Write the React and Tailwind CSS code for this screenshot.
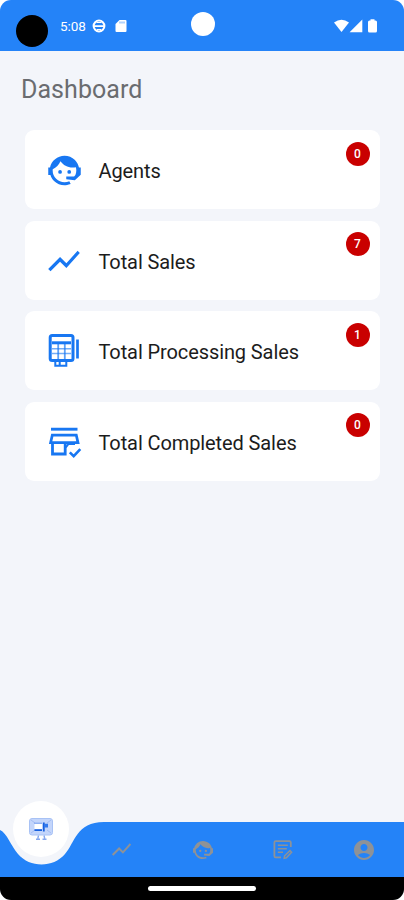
import React from "react";
import { MdShowChart, MdAccountCircle } from "react-icons/md";

function AgentIcon({ className }) {
  return (
    <svg viewBox="0 0 24 24" className={className} fill="currentColor">
      <path d="M18.72,14.76C19.07,13.91 19.26,13 19.26,12C19.26,11.28 19.15,10.59 18.96,9.95C18.31,10.1 17.63,10.18 16.92,10.18C13.86,10.18 11.15,8.67 9.5,6.34C8.61,8.5 6.91,10.26 4.77,11.22C4.73,11.47 4.73,11.74 4.73,12A7.27,7.27 0 0,0 12,19.27C13.05,19.27 14.06,19.04 14.97,18.63C15.54,19.72 15.8,20.26 15.78,20.26C14.14,20.81 12.87,21.08 12,21.08C9.58,21.08 7.27,20.13 5.57,18.42C4.53,17.38 3.76,16.11 3.33,14.73H2V10.18H3.09C3.93,6.04 7.6,2.92 12,2.92C14.4,2.92 16.71,3.87 18.42,5.58C19.69,6.84 20.54,8.45 20.89,10.18H22V14.67L18.38,18L13.08,17.4V15.73H17.91Z" />
      <circle cx="9.27" cy="12.9" r="1.15" />
      <circle cx="14.9" cy="12.9" r="1.15" />
    </svg>
  );
}

function PosIcon() {
  return (
    <svg viewBox="0 0 32 36" className="h-9 w-8" fill="none" stroke="#1877f2">
      <rect x="2.2" y="2.5" width="22.8" height="25" rx="2" strokeWidth="3" />
      <path d="M4 9.8H23" strokeWidth="3" />
      <path d="M10.2 10V26M16.8 10V26" strokeWidth="1.8" opacity=".7" />
      <path d="M4 15.7H23M4 20.6H23" strokeWidth="1.5" opacity=".6" />
      <path d="M7.3 28V32.8H18.3V28M11.7 28V32.5" strokeWidth="2" />
      <path d="M29.5 6.5V25.5" strokeWidth="2.7" />
    </svg>
  );
}

function StoreIcon() {
  return (
    <svg viewBox="0 0 32 32" className="h-8 w-8 overflow-visible" fill="none" stroke="#1877f2">
      <path d="M3 3.2H29.5" strokeWidth="2.9" />
      <path d="M4.3 9.2H28.3L30 16.7H2.6Z" strokeWidth="2.7" />
      <path d="M4.5 17V28H17.2V17" strokeWidth="2.8" />
      <path d="M17.8 21.5L20.5 18H27" strokeWidth="2" />
      <path d="M21.8 26.3L25.7 30.2L32.3 23.2" strokeWidth="2.6" />
    </svg>
  );
}

function MonitorIcon() {
  return (
    <svg viewBox="0 0 26 24" className="h-6 w-[26px]" fill="none">
      <rect x="1.5" y="1.5" width="23" height="16.5" rx="2.5" fill="#c3d5fb" stroke="#a8c2f5" />
      <path d="M3 3L7 6M23 3L19 6M3 16L7 13M23 16L19 13" stroke="#a3bcf3" />
      <path d="M6 6.2H14" stroke="#7ba2ef" />
      <rect x="6.5" y="7" width="7.5" height="5" fill="#fff" />
      <path d="M6.5 13.2H14" stroke="#1760df" strokeWidth="1.8" />
      <path d="M15.8 5.5V14.5" stroke="#1760df" strokeWidth="1.8" />
      <path d="M16 6.8H20V10.5H16Z" fill="#3278ec" />
      <path d="M10.5 18.5L9.8 21.5M16 18.5L16.7 21.5M8 22.3H12M14.5 22.3H18.5" stroke="#86a8ef" strokeWidth="1.4" />
    </svg>
  );
}

function NoteIcon() {
  return (
    <svg viewBox="0 0 20 20" className="h-5 w-5" fill="none" stroke="#8e9297">
      <path d="M17.8 7V2.5Q17.8 1.2 16.5 1.2H2.6Q1.4 1.2 1.4 2.5V16Q1.4 17.3 2.6 17.3H8" strokeWidth="1.8" />
      <path d="M4.8 5.2H14.8M4.8 8.7H13.8M4.8 12.2H10" strokeWidth="1.6" />
      <path d="M11.2 18.2L11.6 15.8L17 10.6L18.6 12.3L13.4 17.7Z" strokeWidth="1.5" />
    </svg>
  );
}

const cards = [
  { label: "Agents", count: 0, icon: <AgentIcon className="size-[39px] shrink-0" /> },
  { label: "Total Sales", count: 7, icon: <MdShowChart className="size-[38px] shrink-0" /> },
  { label: "Total Processing Sales", count: 1, icon: <PosIcon /> },
  { label: "Total Completed Sales", count: 0, icon: <StoreIcon /> },
];

export default function App() {
  return (
    <div className="bg-white">
      <div className="flex h-[900px] w-[404px] flex-col overflow-hidden rounded-[11px] bg-[#f3f5fa] font-['Roboto','Liberation_Sans',sans-serif]">
        <header className="flex h-[51px] shrink-0 items-start bg-[#2483f8] text-white">
          <div className="ml-4 mt-[15px] size-8 rounded-full bg-black" />
          <span className="ml-3 mt-[18px] w-[26px] whitespace-nowrap text-[13.5px] leading-[17px] tracking-[-0.1px]">5:08</span>
          <svg viewBox="0 0 14 14" className="ml-[6px] mt-[19px] size-[14px]" fill="none" stroke="white">
            <circle cx="7" cy="7" r="5.4" strokeWidth="2" />
            <path d="M2 7.2H12" strokeWidth="1.8" />
            <path d="M4.5 3.5H9.5M5 10.5H9" strokeWidth="1.2" />
          </svg>
          <svg viewBox="0 0 12 14" className="ml-[9px] mt-[19px] h-[14px] w-3">
            <path d="M4.5 1H10.5Q11.5 1 11.5 2V12Q11.5 13 10.5 13H1.5Q.5 13 .5 12V5Z" fill="white" />
            <path d="M5 2.5V4.5M7 2.5V4.5M9 2.5V4.5" stroke="#2483f8" strokeWidth=".7" />
          </svg>
          <div className="ml-[64px] mt-3 size-6 rounded-full bg-white" />
          <svg viewBox="0 0 46 16" className="ml-auto mr-[25px] mt-[18px] h-4 w-[46px]" fill="white">
            <path d="M1 4.5Q8.5-.8 16 4.5L8.5 14Z" />
            <path d="M29.3 1.5V14.3H16.6Z" />
            <path d="M35 4Q35 2.5 36.5 2.5H37.5V1.2H41.5V2.5H42.5Q44 2.5 44 4V13Q44 14.5 42.5 14.5H36.5Q35 14.5 35 13Z" />
          </svg>
        </header>
        <main className="flex flex-1 flex-col">
          <h1 className="ml-[21px] mt-[23px] h-[56px] text-[25px] leading-[32px] tracking-[0.05px] text-[#6a6c70]">Dashboard</h1>
          <div className="ml-[25px] flex w-[355px] flex-col gap-[11.5px]">
            {cards.map((card) => (
              <section key={card.label} className="flex h-[79px] items-start rounded-[9px] bg-white">
                <div className="ml-5 mt-[22px] flex h-9 w-[38px] items-center justify-center text-[#1877f2]">{card.icon}</div>
                <span className="ml-[15.5px] mt-[25px] whitespace-nowrap text-[20px] leading-8 tracking-[-0.1px] text-[#1c1c1c]">{card.label}</span>
                <span className="ml-auto mr-[10.5px] mt-[11.5px] flex size-6 items-center justify-center rounded-full bg-[#c90000] text-[12px] font-medium leading-none text-white">{card.count}</span>
              </section>
            ))}
          </div>
        </main>
        <nav className="relative flex h-[78px] shrink-0 flex-col">
          <svg viewBox="0 0 404 55" className="absolute left-0 top-0 h-[55px] w-[404px]" fill="#2483f8">
            <path d="M0 8C7 11 11 24 18 32C30 46 53 46 65 32C75 21 76 0 104 0H404V55H0Z" />
          </svg>
          <div className="relative flex h-[55px] items-center text-[#8e9297]">
            <div className="-mt-[41px] ml-[13px] flex size-14 items-center justify-center rounded-full bg-white"><MonitorIcon /></div>
            <div className="flex flex-1 items-center justify-between pl-[41px] pr-7">
              <MdShowChart className="size-[23px]" />
              <AgentIcon className="-ml-px size-6" />
              <NoteIcon />
              <MdAccountCircle className="size-6" />
            </div>
          </div>
          <div className="flex flex-1 items-center justify-center bg-black">
            <div className="h-[5px] w-[108px] rounded-full bg-white" />
          </div>
        </nav>
      </div>
    </div>
  );
}
